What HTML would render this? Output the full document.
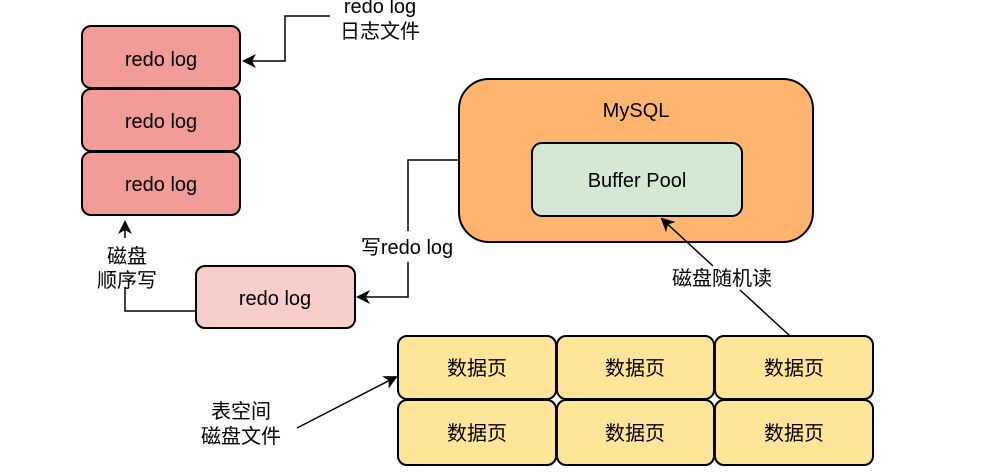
<!DOCTYPE html><html><head><meta charset="utf-8"><style>
body{margin:0;background:#fff;width:988px;height:468px;overflow:hidden}
</style></head><body>
<svg width="988" height="468" xmlns="http://www.w3.org/2000/svg" font-family="Liberation Sans, Noto Sans CJK SC, sans-serif" font-size="20">
<defs><marker id="a" markerWidth="14" markerHeight="14" refX="12" refY="7" orient="auto" markerUnits="userSpaceOnUse"><path d="M0,0 L14,7 L0,14 L4,7 Z" fill="#000"/></marker></defs>
<g stroke="#000" stroke-width="2">
<rect x="82" y="26" width="158" height="62" rx="9" fill="#F19C99"/>
<rect x="82" y="89" width="158" height="62" rx="9" fill="#F19C99"/>
<rect x="82" y="152" width="158" height="63" rx="9" fill="#F19C99"/>
<rect x="196" y="266" width="159" height="62" rx="9" fill="#F8CECC"/>
<rect x="459" y="79" width="354" height="163" rx="30" fill="#FFB570"/>
<rect x="532" y="143" width="210" height="73" rx="10" fill="#D5E8D4"/>
<rect x="398" y="336" width="158" height="63" rx="9" fill="#FFE599"/>
<rect x="557" y="336" width="157" height="63" rx="9" fill="#FFE599"/>
<rect x="715" y="336" width="158" height="63" rx="9" fill="#FFE599"/>
<rect x="398" y="400" width="158" height="65" rx="9" fill="#FFE599"/>
<rect x="557" y="400" width="157" height="65" rx="9" fill="#FFE599"/>
<rect x="715" y="400" width="158" height="65" rx="9" fill="#FFE599"/>
</g>
<g stroke="#000" stroke-width="1.5" fill="none">
<path d="M330,16 H285 V61 H244" marker-end="url(#a)"/>
<path d="M196,311 H125 V287"/>
<path d="M125,238 V222" marker-end="url(#a)"/>
<path d="M459,160 H408 V231"/>
<path d="M408,262 V297 H358" marker-end="url(#a)"/>
<path d="M790,336 L740,290"/>
<path d="M713,266 L662,219" marker-end="url(#a)"/>
<path d="M297,428 L396,377" marker-end="url(#a)"/>
</g>
<g text-anchor="middle" fill="#000">
<text x="161" y="66">redo log</text><text x="161" y="128">redo log</text><text x="161" y="191">redo log</text>
<text x="275" y="305">redo log</text>
<text x="636" y="117">MySQL</text><text x="637" y="187">Buffer Pool</text>
<text x="380" y="13">redo log</text><text x="380" y="38">日志文件</text>
<text x="127" y="263">磁盘</text><text x="127" y="287">顺序写</text>
<text x="407" y="254" style="paint-order:stroke" stroke="#fff" stroke-width="6">写redo log</text>
<text x="722" y="285">磁盘随机读</text>
<text x="241" y="418">表空间</text><text x="241" y="443">磁盘文件</text>
<text x="477" y="375">数据页</text><text x="635" y="375">数据页</text><text x="794" y="375">数据页</text>
<text x="477" y="440">数据页</text><text x="635" y="440">数据页</text><text x="794" y="440">数据页</text>
</g>
</svg>
</body></html>
